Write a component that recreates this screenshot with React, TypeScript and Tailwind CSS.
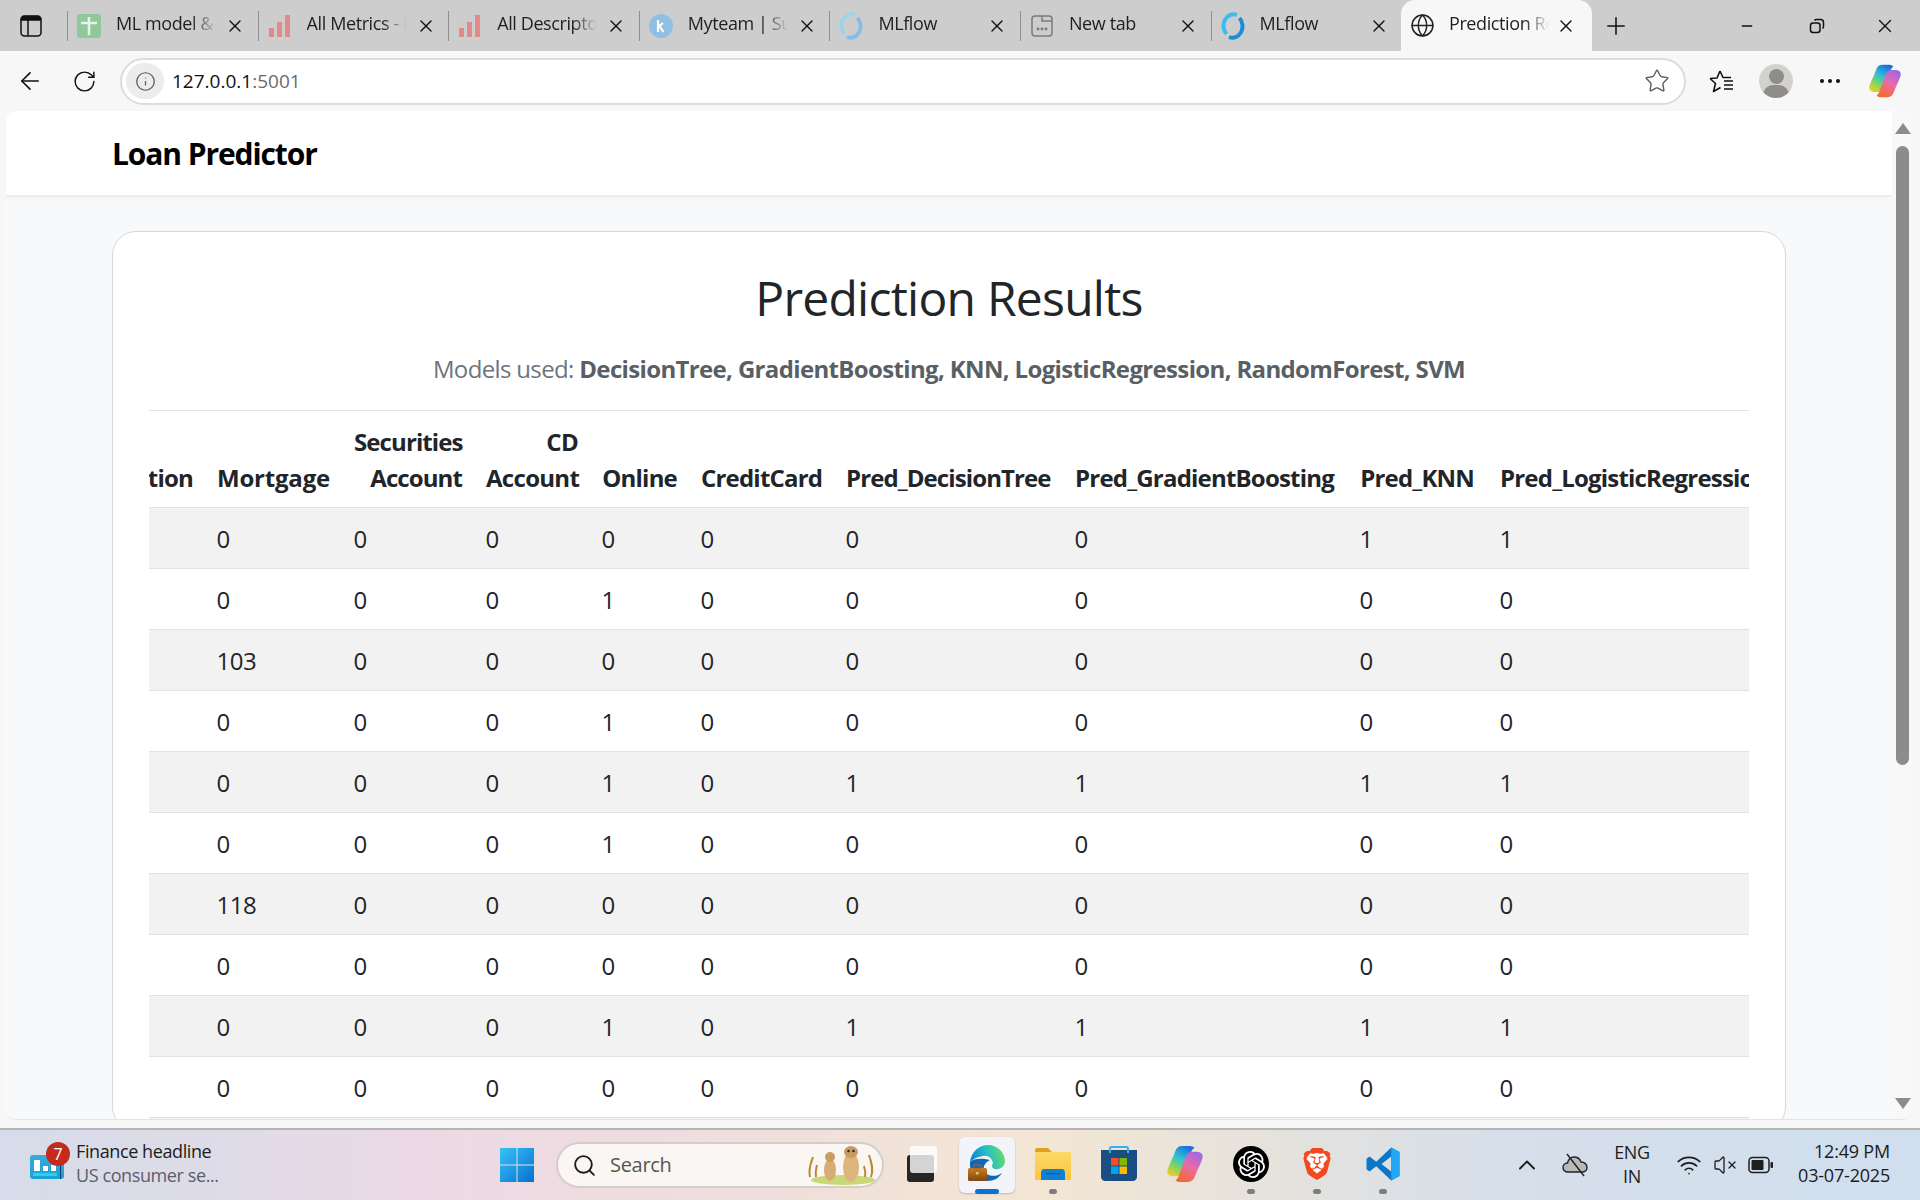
import React from 'react';
import { ArrowLeft, ChevronUp, Globe, Info, Minus, Plus, RotateCw, Search, Star, VolumeX, Wifi, X } from 'lucide-react';
import { SiBrave, SiOpenai } from 'react-icons/si';

// --- favicons ---
const SheetIcon = () => (
  <svg width="24" height="24" viewBox="0 0 24 24">
    <rect x="0" y="0" width="24" height="24" rx="3" fill="#90c89c" />
    <path d="M12 3v18M4 9h16" stroke="#e6f3e8" strokeWidth="2.5" />
  </svg>
);

const BarsIcon = () => (
  <svg width="24" height="24" viewBox="0 0 24 24" fill="#e28a8a">
    <rect x="1" y="14" width="5" height="9" />
    <rect x="9" y="8" width="5" height="15" />
    <rect x="17" y="1" width="5" height="22" />
  </svg>
);

const KIcon = () => (
  <svg width="24" height="24" viewBox="0 0 24 24">
    <circle cx="12" cy="12" r="12" fill="#8fc0e2" />
    <path d="M9 6v12M9 13l5-4M10.500 12l4 6" stroke="#fff" strokeWidth="2.200" fill="none" />
  </svg>
);

const MlflowIcon = ({ faded }: { faded?: boolean }) => (
  <svg width="24" height="28" viewBox="0 0 24 28" fill="none" strokeWidth="4">
    <path d="M16 3A10 11.500 0 0 0 5.500 22" stroke={faded ? '#9ad6ea' : '#39bdf0'} />
    <path d="M8 25A10 11.500 0 0 0 18.500 6" stroke={faded ? '#86bde3' : '#1a8edb'} />
  </svg>
);

const NewTabIcon = () => (
  <svg width="24" height="24" viewBox="0 0 24 24" fill="none" stroke="#7b7b7b" strokeWidth="1.500">
    <rect x="2" y="2" width="20" height="20" rx="3" />
    <path d="M12 2v5h10" />
    <circle cx="8" cy="15" r="0.700" />
    <circle cx="12" cy="15" r="0.700" />
    <circle cx="16" cy="15" r="0.700" />
  </svg>
);

// --- taskbar and toolbar logos ---
const CopilotIcon = ({ id, size }: { id: string; size: number }) => (
  <svg width={size} height={size} viewBox="0 0 40 40">
    <defs>
      <linearGradient id={`${id}a`} x1="0.700" y1="0" x2="0.200" y2="1">
        <stop offset="0" stopColor="#1b6fdc" />
        <stop offset="0.400" stopColor="#2cc0d8" />
        <stop offset="0.750" stopColor="#8fd650" />
        <stop offset="1" stopColor="#f5c92c" />
      </linearGradient>
      <linearGradient id={`${id}b`} x1="0.700" y1="0" x2="0.200" y2="1">
        <stop offset="0" stopColor="#f26a2c" />
        <stop offset="0.500" stopColor="#ec6aa8" />
        <stop offset="1" stopColor="#9a68e8" />
      </linearGradient>
    </defs>
    <path d="M30 3C28 1 26 1 23 1H17C13 1 11 3 9.500 7C7 14 4 19 2 25C0 30 3 33 8 33H13C16 33 18 31 19 28L26 9C27 6 28 4 30 3Z" fill={`url(#${id}a)`} />
    <path transform="rotate(180 20 20)" d="M30 3C28 1 26 1 23 1H17C13 1 11 3 9.500 7C7 14 4 19 2 25C0 30 3 33 8 33H13C16 33 18 31 19 28L26 9C27 6 28 4 30 3Z" fill={`url(#${id}b)`} />
  </svg>
);

const EdgeIcon = () => (
  <svg width="38" height="38" viewBox="0 0 38 38">
    <defs>
      <linearGradient id="edgeTop" x1="0" y1="0.600" x2="1" y2="0.400">
        <stop offset="0" stopColor="#0c7fd0" />
        <stop offset="0.500" stopColor="#27bdc8" />
        <stop offset="1" stopColor="#63dc6c" />
      </linearGradient>
      <linearGradient id="brief" x1="0" y1="0" x2="0" y2="1">
        <stop offset="0" stopColor="#c97f22" />
        <stop offset="1" stopColor="#7f4712" />
      </linearGradient>
    </defs>
    <path d="M2 17C3 7 11 0 20 0C30 0 37 8 37 16C37 22 31 25 27 24C23 23 24 20 25 18C24 13 20 10 15 11C9 12 5 14 2 17Z" fill="url(#edgeTop)" />
    <path d="M2 17C1 28 8 36 19 36C26 36 31 33 34 28C27 33 18 31 16 25C15 20 18 17 22 15C14 13 6 13 2 17Z" fill="#1466b4" />
    <rect x="0" y="23" width="19" height="13" rx="1.500" fill="url(#brief)" />
    <rect x="6" y="20" width="7" height="4" rx="1" fill="none" stroke="#a9671a" strokeWidth="1.200" />
    <rect x="8" y="27" width="2.500" height="2.500" fill="#f2c14a" />
  </svg>
);

const FolderIcon = () => (
  <svg width="36" height="32" viewBox="0 0 36 32">
    <defs>
      <linearGradient id="folder" x1="0" y1="0" x2="0" y2="1">
        <stop offset="0" stopColor="#fdd868" />
        <stop offset="1" stopColor="#fbc53d" />
      </linearGradient>
    </defs>
    <path d="M0 2C0 1 1 0 2 0H13L17 4H35C35.500 4 36 4.500 36 5V8H0Z" fill="#dfa124" />
    <rect x="0" y="4" width="36" height="28" rx="0.500" fill="url(#folder)" />
    <path d="M6 32V25C6 23 7 21 9 21H27C29 21 30 23 30 25V32Z" fill="#0f7fd3" />
    <rect x="11" y="25" width="14" height="1.200" fill="#0a5da5" />
  </svg>
);

const StoreIcon = () => (
  <svg width="36" height="36" viewBox="0 0 36 36">
    <path d="M0 4H36V31C36 33 34 35 32 35H4C2 35 0 33 0 31Z" fill="#1b4d85" />
    <path d="M9 7V2.500C9 1.500 9.500 1 10.500 1H25.500C26.500 1 27 1.500 27 2.500V7" fill="none" stroke="#36b4ea" strokeWidth="2" />
    <rect x="10" y="12" width="7.500" height="7.500" fill="#f25022" />
    <rect x="18.500" y="12" width="7.500" height="7.500" fill="#7fba00" />
    <rect x="10" y="20.500" width="7.500" height="7.500" fill="#00a4ef" />
    <rect x="18.500" y="20.500" width="7.500" height="7.500" fill="#ffb900" />
  </svg>
);

const BraveIcon = () => (
  <div className="relative flex h-[36px] w-[32px] items-center justify-center">
    <div className="absolute top-[5px] h-[24px] w-[20px] rounded-full bg-white" />
    <SiBrave className="relative text-[#f2491f]" size={36} />
  </div>
);

const VscodeIcon = () => (
  <svg width="36" height="36" viewBox="0 0 24 24">
    <path fillRule="evenodd" d="M23 4L17.500 1L7.500 10.500L3 7L1 8.500V15.500L3 17L7.500 13.500L17.500 23L23 20ZM17.500 7V17L11 12Z" fill="#0a78c6" />
    <path d="M17.500 1L23 4V20L17.500 23Z" fill="#23a8f1" />
  </svg>
);

const WindowsIcon = () => (
  <svg width="36" height="36" viewBox="0 0 36 36">
    <defs>
      <linearGradient id="win" x1="0" y1="0" x2="1" y2="1">
        <stop offset="0" stopColor="#38c3f7" />
        <stop offset="1" stopColor="#0670cf" />
      </linearGradient>
    </defs>
    <path d="M1 1H17.500V17.500H1ZM18.500 1H35V17.500H18.500ZM1 18.500H17.500V35H1ZM18.500 18.500H35V35H18.500Z" fill="url(#win)" />
  </svg>
);

const TaskViewIcon = () => (
  <div className="relative h-[36px] w-[36px]">
    <div className="absolute bottom-0 left-[4px] h-[27px] w-[27px] rounded-[3px] bg-[#262626]" />
    <div className="absolute right-[2px] top-0 h-[27px] w-[27px] rounded-[3px] bg-white/80" />
  </div>
);

const Meerkats = () => (
  <svg width="72" height="40" viewBox="0 0 72 40">
    <ellipse cx="38" cy="35" rx="32" ry="5" fill="#c9d777" />
    <path d="M5 32C3 24 6 18 8 12M11 32C10 27 11 24 12 20M66 32C69 24 66 16 64 10M60 32C61 27 60 24 59 21" stroke="#b98a32" strokeWidth="2" fill="none" />
    <ellipse cx="25" cy="25" rx="6" ry="11" fill="#d6ad74" />
    <ellipse cx="25" cy="12" rx="5" ry="5" fill="#c99c62" />
    <ellipse cx="46" cy="22" rx="8" ry="15" fill="#dcb47c" />
    <ellipse cx="46" cy="7" rx="7" ry="6" fill="#c99c62" />
    <circle cx="43.500" cy="6" r="1.300" fill="#3a2a1a" />
    <circle cx="48.500" cy="6" r="1.300" fill="#3a2a1a" />
  </svg>
);

const CloudOff = () => (
  <svg width="26" height="24" viewBox="0 0 26 24">
    <path d="M6 19C3 19 1 17 1 14.500C1 12 3 10 5.500 10C6.500 6 9 4 12 4C15.500 4 18 6 19 9C22.500 9 25 11.500 25 14.500C25 17 23 19 20 19Z" fill="#b9b9b9" stroke="#222" strokeWidth="1.400" />
    <path d="M5 1L22 23" stroke="#222" strokeWidth="1.400" />
  </svg>
);

const BatteryIcon = () => (
  <svg width="26" height="18" viewBox="0 0 26 18">
    <rect x="1" y="1.500" width="20" height="15" rx="3.500" fill="none" stroke="#1f1f1f" strokeWidth="1.500" />
    <rect x="3.500" y="4" width="12" height="10" rx="1" fill="#1f1f1f" />
    <rect x="22.500" y="6" width="2.500" height="6" rx="1" fill="#1f1f1f" />
  </svg>
);

const tabs = [
  { title: 'ML model & Experiment', icon: <SheetIcon /> },
  { title: 'All Metrics - Experiment', icon: <BarsIcon /> },
  { title: 'All Descriptors', icon: <BarsIcon /> },
  { title: 'Myteam | Summary', icon: <KIcon /> },
  { title: 'MLflow', icon: <MlflowIcon faded /> },
  { title: 'New tab', icon: <NewTabIcon /> },
  { title: 'MLflow', icon: <MlflowIcon /> },
];

const columns = [
  { label: 'Education', width: 'w-[140px]', head: 'text-right tracking-[-0.8px]' },
  { label: 'Mortgage', width: 'w-[137px]', head: 'text-right tracking-[-0.2px]' },
  { label: 'Securities Account', width: 'w-[132px]', head: 'text-right tracking-[-0.9px]' },
  { label: 'CD Account', width: 'w-[116px]', head: 'text-right tracking-[-0.7px]' },
  { label: 'Online', width: 'w-[99px]', head: 'text-right tracking-[-0.8px]' },
  { label: 'CreditCard', width: 'w-[145px]', head: 'text-right tracking-[-0.8px]' },
  { label: 'Pred_DecisionTree', width: 'w-[229px]', head: 'text-right tracking-[-0.9px] pr-[13px]' },
  { label: 'Pred_GradientBoosting', width: 'w-[285px]', head: 'text-right tracking-[-0.8px] pr-[14px]' },
  { label: 'Pred_KNN', width: 'w-[140px]', head: 'text-right tracking-[-0.8px] pr-[14px]' },
  { label: 'Pred_LogisticRegression', width: 'w-[340px]', head: 'whitespace-nowrap text-left tracking-[-0.8px]' },
];

// education is scrolled out of view, only the header tail shows
const rows = [
  [1, 0, 0, 0, 0, 0, 0, 0, 1, 1],
  [2, 0, 0, 0, 1, 0, 0, 0, 0, 0],
  [1, 103, 0, 0, 0, 0, 0, 0, 0, 0],
  [2, 0, 0, 0, 1, 0, 0, 0, 0, 0],
  [3, 0, 0, 0, 1, 0, 1, 1, 1, 1],
  [3, 0, 0, 0, 1, 0, 0, 0, 0, 0],
  [1, 118, 0, 0, 0, 0, 0, 0, 0, 0],
  [2, 0, 0, 0, 0, 0, 0, 0, 0, 0],
  [3, 0, 0, 0, 1, 0, 1, 1, 1, 1],
  [2, 0, 0, 0, 0, 0, 0, 0, 0, 0],
  [1, 0, 0, 0, 0, 0, 0, 0, 0, 0],
];

const taskIcons = [
  { icon: <TaskViewIcon /> },
  { icon: <EdgeIcon />, active: true },
  { icon: <FolderIcon />, open: true },
  { icon: <StoreIcon /> },
  { icon: <CopilotIcon id="cpTask" size={38} /> },
  { icon: <div className="flex h-[36px] w-[36px] items-center justify-center rounded-full bg-black"><SiOpenai className="text-white" size={27} /></div>, open: true },
  { icon: <BraveIcon />, open: true },
  { icon: <VscodeIcon />, open: true },
];

const TabStrip = () => (
  <div className="flex h-[51px] items-center bg-[#cdcdcd]">
    <div className="flex w-[67px] justify-center pr-[6px]">
      <svg width="22" height="22" viewBox="0 0 22 22" fill="none" stroke="#111" strokeWidth="1.500">
        <rect x="1" y="1" width="20" height="20" rx="3.500" />
        <path d="M1.500 5H20.500V3L19 1.500H3L1.500 3Z" fill="#111" />
        <path d="M8 5V20.500" />
      </svg>
    </div>
    {tabs.map((tab, i) => (
      <div key={i} className="flex h-[30px] w-[190.600px] shrink-0 items-center border-l border-[#8f8f8f] pl-[9px]">
        <div className="flex w-[24px] justify-center">{tab.icon}</div>
        <span className="-mt-[4px] ml-[15px] w-[100px] overflow-hidden whitespace-nowrap text-[18px] tracking-[-0.4px] text-[#1f1f1f] [mask-image:linear-gradient(90deg,#000_75%,transparent)]">
          {tab.title}
        </span>
        <X className="ml-[9px] text-[#111]" size={20} strokeWidth={1.600} />
      </div>
    ))}
    <div className="relative -ml-[0.200px] flex h-[51px] w-[191px] shrink-0 items-center rounded-t-[14px] bg-[#f7f7f7] pl-[9px]">
      <Globe className="text-[#222]" size={25} strokeWidth={1.400} />
      <span className="-mt-[4px] ml-[14px] w-[100px] overflow-hidden whitespace-nowrap text-[18px] tracking-[-0.4px] text-[#1f1f1f] [mask-image:linear-gradient(90deg,#000_75%,transparent)]">
        Prediction Results
      </span>
      <X className="ml-[7px] text-[#111]" size={20} strokeWidth={1.600} />
    </div>
    <Plus className="ml-[10px] text-[#111]" size={28} strokeWidth={1.300} />
    <div className="ml-auto flex items-center">
      <div className="flex w-[70px] justify-center"><Minus className="text-[#111]" size={16} strokeWidth={2.200} /></div>
      <div className="flex w-[70px] justify-center">
        <svg width="16" height="16" viewBox="0 0 16 16" fill="none" stroke="#111" strokeWidth="1.500">
          <rect x="1.500" y="5" width="9.500" height="9.500" rx="2.500" />
          <path d="M5.500 2.500C6 1.800 6.500 1.500 7.500 1.500H11.500C13.200 1.500 14.500 2.800 14.500 4.500V8.500C14.500 9.500 14.200 10 13.500 10.500" />
        </svg>
      </div>
      <div className="flex w-[68px] justify-center pr-[2px]"><X className="text-[#111]" size={22} strokeWidth={1.500} /></div>
    </div>
  </div>
);

const Toolbar = () => (
  <div className="flex h-[60px] items-center bg-[#f7f7f7]">
    <div className="flex w-[60px] justify-center"><ArrowLeft className="text-[#111]" size={28} strokeWidth={1.400} /></div>
    <div className="flex w-[48px] justify-center"><RotateCw className="text-[#111]" size={25} strokeWidth={1.400} /></div>
    <div className="ml-[12px] flex h-[47px] w-[1566px] items-center rounded-full border-2 border-[#dcdcdc] bg-white pl-[4px] pr-[14px]">
      <div className="flex h-[36px] w-[38px] items-center justify-center rounded-full bg-[#ececec]">
        <Info className="text-[#555]" size={21} strokeWidth={1.400} />
      </div>
      <span className="ml-[8px] text-[19px] text-[#111]">127.0.0.1<span className="text-[#6a6a6a]">:5001</span></span>
      <Star className="ml-auto text-[#5c5c5c]" size={26} strokeWidth={1.300} />
    </div>
    <div className="ml-[21px] flex w-[30px] justify-center">
      <svg width="26" height="24" viewBox="0 0 26 24" fill="none" stroke="#111" strokeWidth="1.600" strokeLinejoin="round">
        <path d="M11 2L14 8.500H22M1 9.500L8 9L11 2M1 9.500L6.500 14.500L4.500 22.500L11.500 18.500" />
        <path d="M15 13H24M15 17H24M15 21H24" transform="translate(0 -1)" />
      </svg>
    </div>
    <div className="relative ml-[22px] h-[34px] w-[34px] overflow-hidden rounded-full bg-[#d2d1cd]">
      <div className="absolute left-[10px] top-[5px] h-[15px] w-[15px] rounded-full bg-[#8e8d8a]" />
      <div className="absolute left-[4px] top-[21px] h-[20px] w-[26px] rounded-full bg-[#8e8d8a]" />
    </div>
    <div className="ml-[27px] flex w-[20px] justify-between">
      <div className="h-[4px] w-[4px] rounded-full bg-[#111]" />
      <div className="h-[4px] w-[4px] rounded-full bg-[#111]" />
      <div className="h-[4px] w-[4px] rounded-full bg-[#111]" />
    </div>
    <div className="ml-[28px]"><CopilotIcon id="cpBar" size={34} /></div>
  </div>
);

const ResultsTable = () => (
  <div className="overflow-hidden border-t border-[#dee2e6]">
    <table className="-ml-[84px] w-[1683px] table-fixed border-separate border-spacing-0 text-[24px] leading-9 text-[#212529]">
      <colgroup>
        {columns.map((col) => (
          <col key={col.label} className={col.width} />
        ))}
      </colgroup>
      <thead>
        <tr>
          {columns.map((col) => (
            <th key={col.label} className={`border-b border-[#dee2e6] pb-[11px] pl-3 pr-3 pt-[13px] align-bottom font-bold ${col.head}`}>
              {col.label}
            </th>
          ))}
        </tr>
      </thead>
      <tbody>
        {rows.map((row, r) => (
          <tr key={r} className={r % 2 === 0 ? 'bg-[#f2f2f2]' : 'bg-white'}>
            {row.map((value, c) => (
              <td key={c} className="border-b border-[#dee2e6] pb-[11px] pl-[11.500px] pr-3 pt-[13px] tracking-[-0.5px]">
                {value}
              </td>
            ))}
          </tr>
        ))}
      </tbody>
    </table>
  </div>
);

const Page = () => (
  <div className="ml-[6px] mr-[7px] flex h-[1009px] overflow-hidden rounded-[10px] border-b border-[#e4e4e4] bg-white">
    <main className="flex-1 overflow-hidden bg-[#f8f9fa]">
      <nav className="flex h-[84px] items-center bg-white pl-[106px] shadow-[0_1px_4px_rgba(0,0,0,0.1)]">
        <span className="mt-[1px] text-[30px] font-bold tracking-[-1.1px] text-black">Loan Predictor</span>
      </nav>
      <div className="mx-[106px] mt-[36px] h-[900px] rounded-3xl border border-[#d5d8dc] bg-white px-[36px] pt-[37px]">
        <h2 className="text-center text-[48px] font-medium leading-[58px] tracking-[-0.75px] text-[#212529]">Prediction Results</h2>
        <p className="mb-[23px] mt-[24px] text-center text-[24px] leading-9 tracking-[-0.65px] text-[#6c757d]">
          Models used: <b className="text-[#595f65]">DecisionTree, GradientBoosting, KNN, LogisticRegression, RandomForest, SVM</b>
        </p>
        <ResultsTable />
      </div>
    </main>
    <div className="flex w-[21px] flex-col items-center bg-[#f8f8f8] pt-[12px]">
      <div className="h-0 w-0 border-x-[8px] border-b-[11px] border-x-transparent border-b-[#8c8c8c]" />
      <div className="mt-[12px] h-[619px] w-[13px] rounded-full bg-[#8c8c8c]" />
      <div className="mt-auto mb-[10px] h-0 w-0 border-x-[8px] border-t-[11px] border-x-transparent border-t-[#8c8c8c]" />
    </div>
  </div>
);

const Taskbar = () => (
  <div className="mt-[8px] flex h-[72px] items-center border-t-2 border-[#b4b4b4] bg-[linear-gradient(90deg,#d6dce9_0%,#dfdbe8_12%,#ecd9e5_22%,#efdfdc_40%,#f3e6d4_54%,#e6e2dc_66%,#d6dfea_78%,#d0deee_100%)] text-[#1c1c1c]">
    <div className="flex w-[484px] shrink-0 items-center pl-[30px]">
      <div className="relative mt-[4px] h-[24px] w-[34px] rounded-[3px] bg-[linear-gradient(#3aa9dc,#1d9fd4)]">
        <div className="absolute bottom-[8px] left-[4px] h-[11px] w-[6px] bg-white" />
        <div className="absolute bottom-[8px] left-[13px] h-[5px] w-[5px] bg-white" />
        <div className="absolute bottom-[8px] left-[21px] h-[6px] w-[5px] bg-white" />
        <div className="absolute bottom-[3px] left-[3px] h-[3px] w-[24px] bg-[#23d4f0]" />
        <div className="absolute bottom-0 right-[3px] h-[15px] w-[1.500px] bg-[#0b3a66]" />
        <div className="absolute -right-[6px] -top-[13px] flex h-[24px] w-[24px] items-center justify-center rounded-full bg-[#c42b1c] text-[16px] text-white">7</div>
      </div>
      <div className="-mt-[4px] ml-[12px] text-[18px] leading-[24px] tracking-[-0.4px]">
        <div>Finance headline</div>
        <div className="text-[#5b5e68]">US consumer se...</div>
      </div>
    </div>
    <div className="flex w-[66px] shrink-0 justify-center"><WindowsIcon /></div>
    <div className="ml-[6px] flex h-[46px] w-[328px] shrink-0 items-center rounded-full border-2 border-[#d5cdca] bg-[#faf6f3] pl-[14px] pr-[5px]">
      <Search className="text-[#1c1c1c]" size={25} strokeWidth={1.800} />
      <span className="ml-[13px] text-[20px] tracking-[-0.3px] text-[#555]">Search</span>
      <div className="ml-auto"><Meerkats /></div>
    </div>
    <div className="ml-[4px] flex shrink-0">
      {taskIcons.map((item, i) => (
        <div key={i} className="relative flex h-[56px] w-[66px] items-center justify-center">
          {item.active && <div className="absolute inset-y-0 left-[5px] right-[5px] rounded-[6px] bg-[#f3f4f9] shadow-[0_1px_2px_rgba(0,0,0,0.2)]" />}
          <div className="relative -mt-[2px]">{item.icon}</div>
          {item.active && <div className="absolute -bottom-[1px] left-[21px] h-[5px] w-[24px] rounded-full bg-[#0a74d0]" />}
          {item.open && <div className="absolute -bottom-[1px] left-[29px] h-[5px] w-[8px] rounded-full bg-[#7d7d7d]" />}
        </div>
      ))}
    </div>
    <div className="ml-[97px] flex shrink-0 items-center">
      <ChevronUp size={28} strokeWidth={1.600} />
      <div className="ml-[21px]"><CloudOff /></div>
      <div className="-mt-[2px] ml-[14px] w-[60px] text-center text-[18px] leading-[24px] tracking-[-0.3px]">
        <div>ENG</div>
        <div>IN</div>
      </div>
      <Wifi className="ml-[14px]" size={26} strokeWidth={1.500} />
      <VolumeX className="ml-[11px]" size={24} strokeWidth={1.300} />
      <div className="ml-[11px]"><BatteryIcon /></div>
    </div>
    <div className="-mt-[4px] ml-auto shrink-0 whitespace-nowrap pr-[30px] text-right text-[18px] leading-[24px] tracking-[-0.2px]">
      <div>12:49 PM</div>
      <div>03-07-2025</div>
    </div>
  </div>
);

export default function App() {
  return (
    <div className="h-[1200px] w-[1920px] overflow-hidden bg-[#f7f7f7] font-['Open_Sans',sans-serif]">
      <TabStrip />
      <Toolbar />
      <Page />
      <Taskbar />
    </div>
  );
}
